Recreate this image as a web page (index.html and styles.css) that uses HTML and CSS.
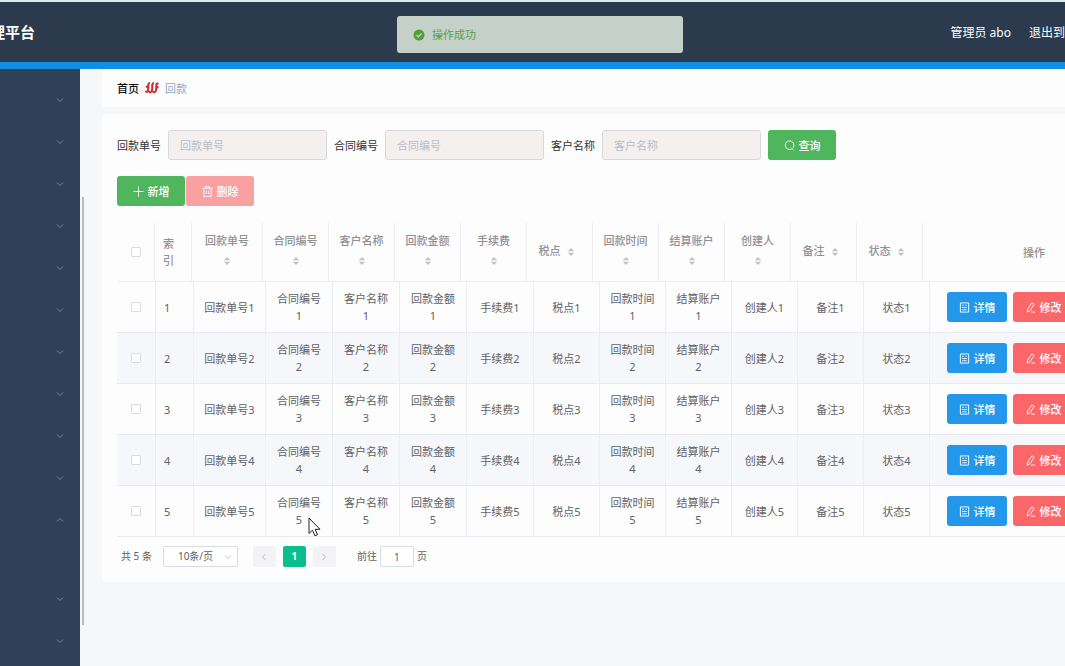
FILE: index.html
```html
<!DOCTYPE html>
<html lang="zh-CN">
<head>
<meta charset="utf-8">
<title>回款</title>
<link rel="stylesheet" href="styles.css">
</head>
<body>
<svg class="sprite" aria-hidden="true">
  <symbol id="down" viewBox="0 0 8 8"><path d="M1 2.5 4 5.5 7 2.5" fill="none" stroke="currentColor"/></symbol>
  <symbol id="up" viewBox="0 0 8 8"><path d="M1 5.5 4 2.5 7 5.5" fill="none" stroke="currentColor"/></symbol>
  <symbol id="sort" viewBox="0 0 8 10"><path d="M0 4 4 0l4 4ZM0 6h8L4 10Z" fill="currentColor"/></symbol>
  <symbol id="doc" viewBox="0 0 12 12"><path d="M1.500 1h9v10h-9ZM3.500 3.500h2M3.500 6h5M3.500 8.500h5M7 3.500h1.500" fill="none" stroke="currentColor"/></symbol>
  <symbol id="edit" viewBox="0 0 12 12"><path d="M7.500 1 10 2.500 5.500 9.500 2.500 11 2.800 7.800ZM6.500 11H11" fill="none" stroke="currentColor"/></symbol>
</svg>
<div class="page">
  <header class="topbar">
    <h1 class="brand">理平台</h1>
    <nav class="user-nav"><span>管理员 abo</span><a href="#">退出到</a></nav>
  </header>
  <div class="shell">
    <aside class="sidebar">
      <button class="menu" aria-label="菜单 1"><svg><use href="#down"/></svg></button>
      <button class="menu" aria-label="菜单 2"><svg><use href="#down"/></svg></button>
      <button class="menu" aria-label="菜单 3"><svg><use href="#down"/></svg></button>
      <button class="menu" aria-label="菜单 4"><svg><use href="#down"/></svg></button>
      <button class="menu" aria-label="菜单 5"><svg><use href="#down"/></svg></button>
      <button class="menu" aria-label="菜单 6"><svg><use href="#down"/></svg></button>
      <button class="menu" aria-label="菜单 7"><svg><use href="#down"/></svg></button>
      <button class="menu" aria-label="菜单 8"><svg><use href="#down"/></svg></button>
      <button class="menu" aria-label="菜单 9"><svg><use href="#down"/></svg></button>
      <button class="menu" aria-label="菜单 10"><svg><use href="#down"/></svg></button>
      <button class="menu menu-open" aria-label="菜单 11"><svg><use href="#up"/></svg></button>
      <button class="menu" aria-label="菜单 12"><svg><use href="#down"/></svg></button>
      <button class="menu" aria-label="菜单 13"><svg><use href="#down"/></svg></button>
      <div class="thumb"></div>
    </aside>
    <main class="main">
      <nav class="card crumbs">
        <a href="#">首页</a>
        <svg class="flame" viewBox="0 0 14 12"><path d="M5 1C2 1 4 5 3 8 2.500 11 1 10 .5 9M9 1C6 1 8 5 7 8 6.500 11 4.500 11 4 9M13.500 2C10 0 12 5 11 8 10.500 11 8.500 11 8 9M1 5 3.500 4M12 5.500 13.500 5" fill="none" stroke="#cf2a2e" stroke-width="2"/></svg>
        <span>回款</span>
      </nav>
      <section class="card">
        <form class="filters">
          <label for="f1">回款单号</label><input id="f1" placeholder="回款单号">
          <label for="f2">合同编号</label><input id="f2" placeholder="合同编号">
          <label for="f3">客户名称</label><input id="f3" placeholder="客户名称">
          <button class="btn green" type="button"><svg viewBox="0 0 12 12"><path d="M8.500 9.700A4.700 4.700 0 1 1 10 8.300M8.500 9 10.500 11" fill="none" stroke="currentColor"/></svg>查询</button>
        </form>
        <div class="tools">
          <button class="btn green"><svg viewBox="0 0 12 12"><path d="M6 .5v11M.5 6h11" fill="none" stroke="currentColor"/></svg>新增</button>
          <button class="btn pale"><svg viewBox="0 0 12 12"><path d="M.5 2.500h11M4 2.500v-2h4v2M2 2.500v9h8v-9M4.700 5v4M7.300 5v4" fill="none" stroke="currentColor"/></svg>删除</button>
        </div>
        <table class="grid head">
          <colgroup><col class="h-check"><col class="h-index"><col class="h-no"><col class="w66" span="10"><col class="h-ops"></colgroup>
          <thead><tr>
            <th><input type="checkbox" aria-label="全选"></th>
            <th class="left">索引</th>
            <th>回款单号<span class="sort"><svg><use href="#sort"/></svg></span></th>
            <th>合同编号<span class="sort"><svg><use href="#sort"/></svg></span></th>
            <th>客户名称<span class="sort"><svg><use href="#sort"/></svg></span></th>
            <th>回款金额<span class="sort"><svg><use href="#sort"/></svg></span></th>
            <th>手续费<span class="sort"><svg><use href="#sort"/></svg></span></th>
            <th>税点<span class="sort"><svg><use href="#sort"/></svg></span></th>
            <th>回款时间<span class="sort"><svg><use href="#sort"/></svg></span></th>
            <th>结算账户<span class="sort"><svg><use href="#sort"/></svg></span></th>
            <th>创建人<span class="sort"><svg><use href="#sort"/></svg></span></th>
            <th>备注<span class="sort"><svg><use href="#sort"/></svg></span></th>
            <th>状态<span class="sort"><svg><use href="#sort"/></svg></span></th>
            <th>操作</th>
          </tr></thead>
        </table>
        <table class="grid">
          <colgroup><col class="b-check"><col class="b-index"><col class="b-no"><col class="w67" span="4"><col class="w66" span="6"><col class="b-ops"></colgroup>
          <tbody>
            <tr><td><input type="checkbox" aria-label="选择 1"></td><td class="left">1</td><td>回款单号1</td><td>合同编号1</td><td>客户名称1</td><td>回款金额1</td><td>手续费1</td><td>税点1</td><td>回款时间1</td><td>结算账户1</td><td>创建人1</td><td>备注1</td><td>状态1</td><td class="ops"><div><button class="btn blue"><svg><use href="#doc"/></svg>详情</button><button class="btn red"><svg><use href="#edit"/></svg>修改</button></div></td></tr>
            <tr><td><input type="checkbox" aria-label="选择 2"></td><td class="left">2</td><td>回款单号2</td><td>合同编号2</td><td>客户名称2</td><td>回款金额2</td><td>手续费2</td><td>税点2</td><td>回款时间2</td><td>结算账户2</td><td>创建人2</td><td>备注2</td><td>状态2</td><td class="ops"><div><button class="btn blue"><svg><use href="#doc"/></svg>详情</button><button class="btn red"><svg><use href="#edit"/></svg>修改</button></div></td></tr>
            <tr><td><input type="checkbox" aria-label="选择 3"></td><td class="left">3</td><td>回款单号3</td><td>合同编号3</td><td>客户名称3</td><td>回款金额3</td><td>手续费3</td><td>税点3</td><td>回款时间3</td><td>结算账户3</td><td>创建人3</td><td>备注3</td><td>状态3</td><td class="ops"><div><button class="btn blue"><svg><use href="#doc"/></svg>详情</button><button class="btn red"><svg><use href="#edit"/></svg>修改</button></div></td></tr>
            <tr><td><input type="checkbox" aria-label="选择 4"></td><td class="left">4</td><td>回款单号4</td><td>合同编号4</td><td>客户名称4</td><td>回款金额4</td><td>手续费4</td><td>税点4</td><td>回款时间4</td><td>结算账户4</td><td>创建人4</td><td>备注4</td><td>状态4</td><td class="ops"><div><button class="btn blue"><svg><use href="#doc"/></svg>详情</button><button class="btn red"><svg><use href="#edit"/></svg>修改</button></div></td></tr>
            <tr><td><input type="checkbox" aria-label="选择 5"></td><td class="left">5</td><td>回款单号5</td><td>合同编号5</td><td>客户名称5</td><td>回款金额5</td><td>手续费5</td><td>税点5</td><td>回款时间5</td><td>结算账户5</td><td>创建人5</td><td>备注5</td><td>状态5</td><td class="ops"><div><button class="btn blue"><svg><use href="#doc"/></svg>详情</button><button class="btn red"><svg><use href="#edit"/></svg>修改</button></div></td></tr>
          </tbody>
        </table>
        <div class="pager">
          <span>共 5 条</span>
          <span class="size"><select aria-label="每页条数"><option>10条/页</option></select><svg><use href="#down"/></svg></span>
          <div class="pages">
            <button aria-label="上一页"><svg viewBox="0 0 8 8"><path d="M5.500 1 2.500 4 5.500 7" fill="none" stroke="currentColor"/></svg></button>
            <button class="current">1</button>
            <button aria-label="下一页"><svg viewBox="0 0 8 8"><path d="M2.500 1 5.500 4 2.500 7" fill="none" stroke="currentColor"/></svg></button>
          </div>
          <label class="jump">前往<input value="1">页</label>
        </div>
      </section>
    </main>
  </div>
  <div class="toast" role="status">
    <svg viewBox="0 0 12 12"><circle cx="6" cy="6" r="5.500" fill="#4f9f3c"/><path d="M3.500 6 5.300 7.800 8.700 4.400" fill="none" stroke="#c5d0c9" stroke-width="1.300"/></svg>
    <span>操作成功</span>
  </div>
  <svg class="cursor" viewBox="0 0 13 20"><path d="M1 1v15.500l3.500-3.300 2.400 5.600 2.600-1.100-2.400-5.400H12Z" fill="#fff" stroke="#222"/></svg>
</div>
</body>
</html>
```
FILE: styles.css
```css
* { box-sizing: border-box; }
body {
  margin: 0;
  font: 11px/17px "Noto Sans", "Noto Sans CJK SC", sans-serif;
  color: #606266;
}
button, input, select { font: inherit; color: inherit; margin: 0; }
a { color: inherit; text-decoration: none; }
.sprite { position: absolute; width: 0; height: 0; }

.page {
  position: relative;
  display: flex;
  flex-direction: column;
  min-height: 100vh;
  overflow: hidden;
  background: #f5f7f9;
}
.topbar {
  display: flex;
  justify-content: space-between;
  align-items: center;
  height: 69px;
  border-top: 2px solid #dcebf0;
  border-bottom: 7px solid #108ee6;
  background: #2b3a4c;
  color: #fff;
  white-space: nowrap;
}
.brand { margin: 0 0 0 -10px; font-size: 15px; line-height: 20px; }
.user-nav { display: flex; gap: 18px; font-size: 12px; }

.shell { display: flex; flex: 1; }
.sidebar {
  position: relative;
  flex: none;
  width: 80px;
  padding-top: 10px;
  background: #304057;
}
.menu {
  display: flex;
  justify-content: flex-end;
  align-items: center;
  width: 100%;
  height: 42px;
  padding: 0 16px 0 0;
  border: 0;
  background: none;
  color: #76879b;
}
.menu svg { width: 8px; height: 8px; }
.menu-open { margin-bottom: 37px; }
.thumb {
  position: absolute;
  top: 128px;
  left: 82px;
  width: 2px;
  height: 428px;
  background: #b9bdc3;
}
.main { flex: 1; min-width: 0; padding-left: 22px; }
.card { padding: 16px 0 15px 15px; border-radius: 4px 0 0 4px; background: #fdfdfe; }
.crumbs {
  display: flex;
  align-items: center;
  gap: 6px;
  height: 38px;
  padding: 0 0 0 15px;
  margin-bottom: 7px;
  border-radius: 0 0 0 4px;
  color: #97a8be;
}
.crumbs a { color: #111; font-weight: 500; }
.flame { width: 14px; height: 12px; }

.filters { display: flex; align-items: center; gap: 7px; color: #333; }
.filters input {
  width: 159px;
  height: 30px;
  padding: 0 11px;
  border: 1px solid #d8d9dd;
  border-radius: 3px;
  background: #f3f0ef;
}
.filters input::placeholder { color: #b9bdc6; }
.tools { display: flex; gap: 1px; margin: 16px 0 17px; }
.btn {
  display: flex;
  justify-content: center;
  align-items: center;
  gap: 4px;
  width: 68px;
  height: 30px;
  padding: 0;
  border: 0;
  border-radius: 3px;
  color: #fff;
  font-weight: 500;
}
.btn svg { width: 11px; height: 11px; }
.green { background: #50b65d; }
.pale { background: #f9a0a0; }
.blue { width: 60px; background: #2397ea; }
.red { width: 60px; background: #fb6769; }

.grid { table-layout: fixed; width: 1039px; border-spacing: 0; }
.head { width: 1029px; }
.grid th, .grid td {
  padding: 8px 9px;
  border-right: 1px solid #ebedf2;
  border-bottom: 1px solid #e9ebf0;
  text-align: center;
  overflow-wrap: anywhere;
}
.grid th { height: 59px; color: #8f9196; font-weight: 500; }
.grid .left { padding-left: 8px; text-align: left; }
.grid tr:nth-child(even) td { background: #f5f7fa; }
.grid input {
  display: block;
  width: 10px;
  height: 10px;
  margin: auto;
  appearance: none;
  border: 1px solid #d9dce2;
  border-radius: 1px;
  background: #fff;
}
.grid td.ops { padding: 0 17px; }
.ops div { display: flex; gap: 6px; }
.sort {
  display: inline-flex;
  justify-content: center;
  align-items: center;
  width: 20px;
  height: 24px;
  vertical-align: middle;
  color: #bfc2c9;
}
.sort svg { width: 8px; height: 8px; }
.h-check { width: 38px; }
.h-index { width: 37px; }
.h-no { width: 71px; }
.h-ops { width: 223px; }
.b-check { width: 39px; }
.b-index { width: 38px; }
.b-no { width: 72px; }
.b-ops { width: 226px; }
.w66 { width: 66px; }
.w67 { width: 67px; }

.pager {
  display: flex;
  align-items: center;
  gap: 11px;
  padding: 9px 0 0 4px;
  font-size: 10px;
}
.size { display: flex; align-items: center; }
.size select {
  width: 75px;
  height: 21px;
  padding: 0 14px;
  appearance: none;
  border: 1px solid #d9dce2;
  border-radius: 2px;
  background: #fff;
}
.size svg { width: 8px; height: 8px; margin-left: -14px; margin-right: 6px; color: #c0c4cc; }
.pages { display: flex; gap: 7px; margin: 0 10px 0 4px; }
.pages button {
  display: flex;
  justify-content: center;
  align-items: center;
  width: 23px;
  height: 21px;
  padding: 0;
  border: 0;
  border-radius: 2px;
  background: #f3f3f5;
  color: #b4b8bf;
}
.pages svg { width: 8px; height: 8px; }
.pages .current { background: #0abf8d; color: #fff; font-weight: 700; }
.jump { display: flex; align-items: center; gap: 3px; }
.jump input {
  width: 34px;
  height: 21px;
  padding: 0;
  border: 1px solid #d9dce2;
  border-radius: 2px;
  background: #fff;
  text-align: center;
}

.toast {
  position: absolute;
  top: 16px;
  left: 397px;
  display: flex;
  align-items: center;
  gap: 7px;
  width: 286px;
  height: 37px;
  padding-left: 16px;
  border-radius: 3px;
  background: #c5d0c9;
  color: #5a9f48;
}
.toast svg { width: 12px; height: 12px; }
.cursor { position: absolute; top: 517px; left: 308px; width: 13px; height: 20px; }
```
